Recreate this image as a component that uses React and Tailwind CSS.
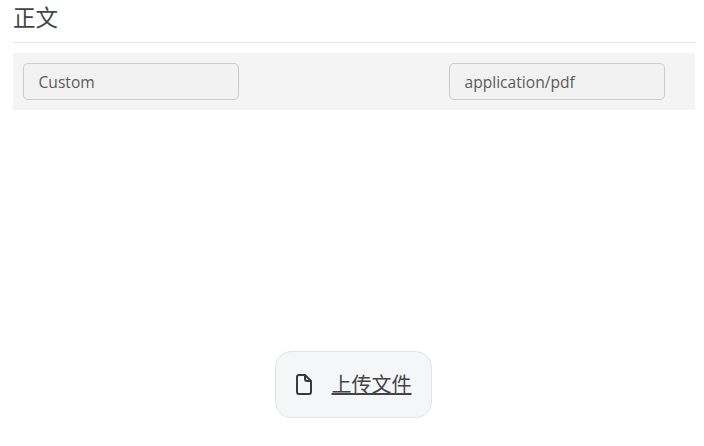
const font = { sans: "font-['Open_Sans','Noto_Sans_CJK_SC',sans-serif]" };

function FileIcon() {
  return (
    <svg width="16" height="21" viewBox="0 0 16 21" fill="none" stroke="#3a3a3a" strokeWidth="2" strokeLinejoin="round" className="shrink-0">
      <path d="M3 1h6l6 6v11a2 2 0 0 1-2 2H3a2 2 0 0 1-2-2V3a2 2 0 0 1 2-2z" />
      <path d="M9 1v4a2 2 0 0 0 2 2h4" />
    </svg>
  );
}

function Field({ value, className = '' }) {
  return (
    <div className={`flex h-[37px] w-[216px] items-center rounded-[5px] border border-[#cccccc] bg-[#f2f2f2] pt-[2px] pl-[14.5px] text-[15.6px] text-[#5a5a5a] ${className}`}>
      {value}
    </div>
  );
}

export default function App() {
  return (
    <div className={`h-[446px] w-[704px] bg-white px-[13px] pr-[9px] ${font.sans}`}>
      <h2 className="h-[43px] border-b border-[#e8e8e8] pt-[2px] text-[22.5px] leading-[32px] font-normal text-[#444444]">正文</h2>
      <div className="mt-[10px] flex h-[57px] items-center bg-[#f4f4f4] px-[10px]">
        <Field value="Custom" />
        <Field value="application/pdf" className="ml-[210px]" />
      </div>
      <div className="mt-[241px] flex justify-center pr-[2px]">
        <button className="flex h-[67px] w-[157px] items-center rounded-[16px] border border-[#e2e5ea] bg-[#f5f6f8] pl-[20px] text-[#444444]">
          <FileIcon />
          <span className="ml-[20px] text-[20px] leading-[28px] underline">上传文件</span>
        </button>
      </div>
    </div>
  );
}
